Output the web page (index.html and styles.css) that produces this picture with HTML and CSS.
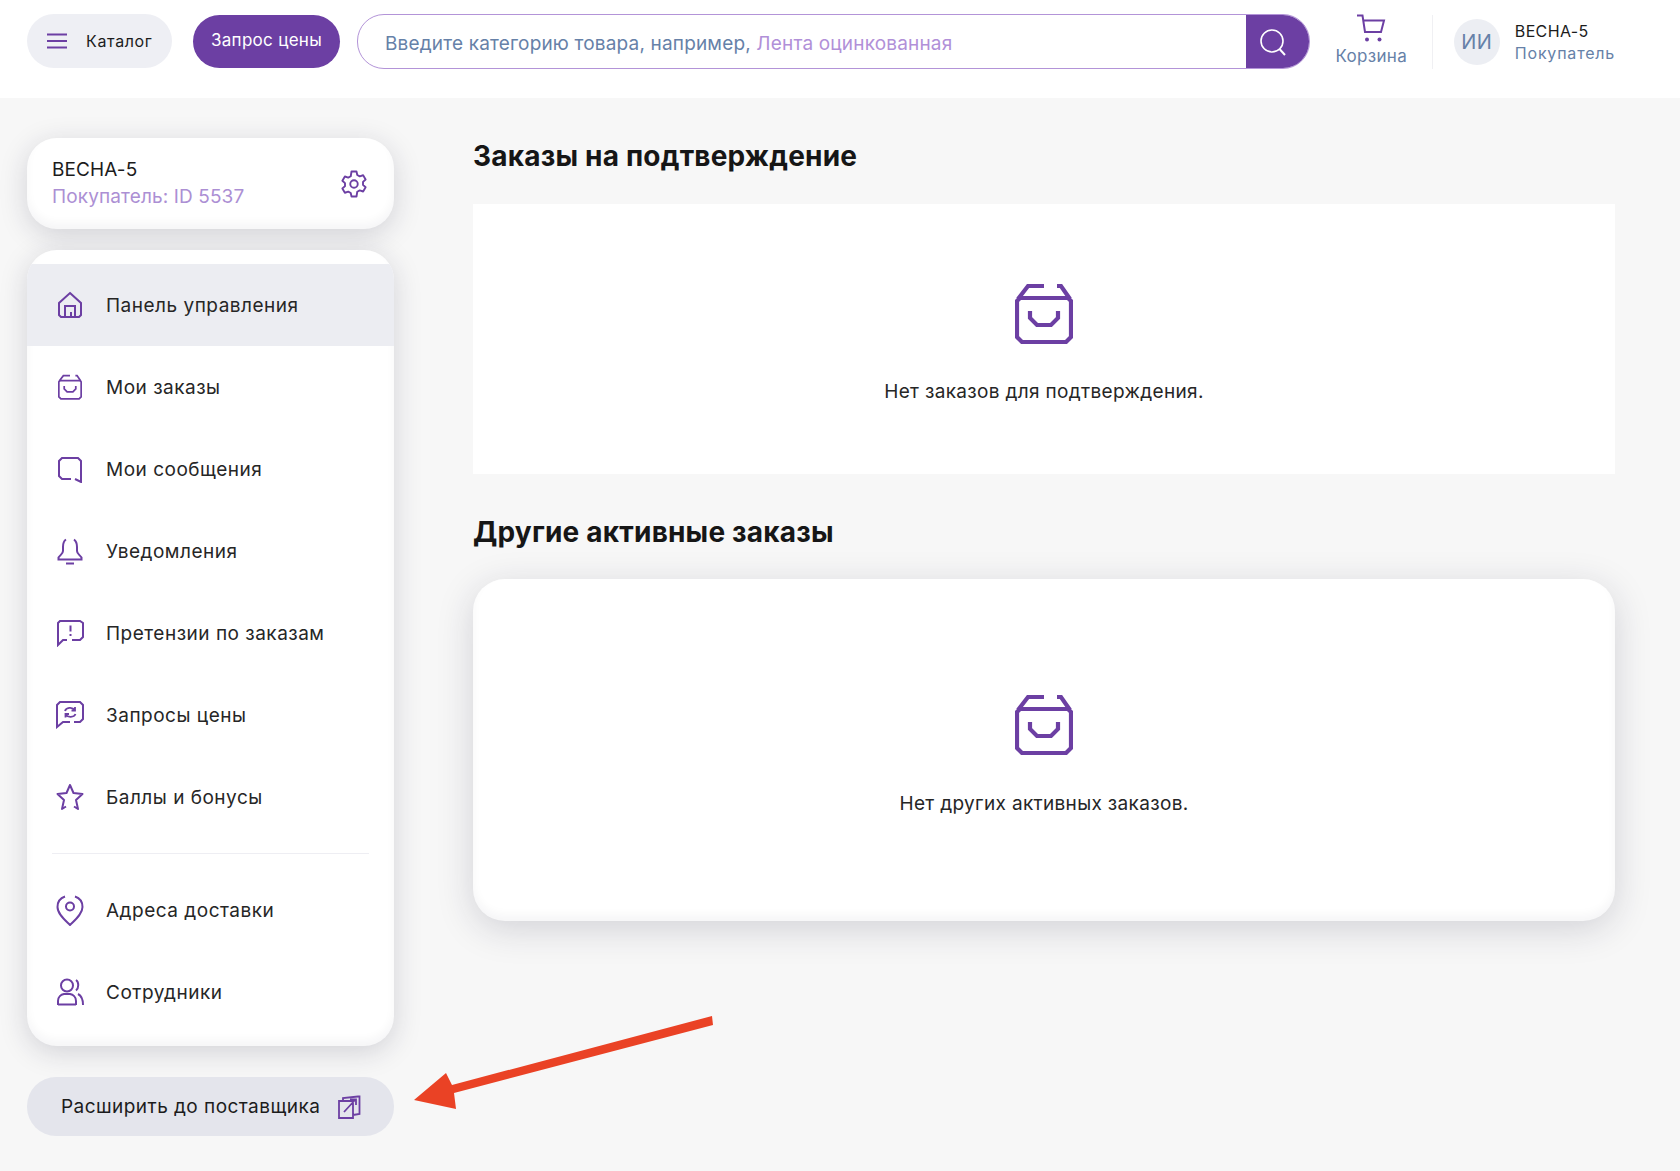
FILE: index.html
```html
<!DOCTYPE html>
<html lang="ru">
<head>
	<meta charset="UTF-8">
	<title>Панель управления</title>
	<link rel="stylesheet" href="styles.css">
</head>
<body>
	<svg class="sprite" width="0" height="0">
		<symbol id="i-box" viewBox="0 0 58 61">
			<path d="M29 3H13L3 16M42 3H46L55 16M5 15H53L56 18V54L51 59H7L2 54V18ZM15 28V35L22 42H36L43 35V28" fill="none" stroke="currentColor" stroke-width="4.2"/>
		</symbol>
	</svg>

	<header class="topbar">
		<a class="catalog-btn">
			<svg class="burger" width="22" height="16" viewBox="0 0 22 16"><path d="M1 1.5H21M1 8H21M1 14.5H21" stroke="currentColor" stroke-width="2"/></svg>
			<span>Каталог</span>
		</a>
		<a class="request-btn">Запрос цены</a>
		<div class="search">
			<div class="search-text">Введите категорию товара, например, <span>Лента оцинкованная</span></div>
			<div class="search-btn">
				<svg width="30" height="30" viewBox="0 0 30 30"><circle cx="14" cy="14" r="11" fill="none" stroke="#fff" stroke-width="1.6"/><path d="M21.5 22L27 28" stroke="#fff" stroke-width="2"/></svg>
			</div>
		</div>
		<div class="cart">
			<svg width="32" height="28" viewBox="0 0 32 28"><path d="M2 1.5H7.500L10 18H26L29 6.500H8.500" fill="none" stroke="currentColor" stroke-width="2"/><circle cx="12" cy="25.5" r="2" fill="currentColor"/><circle cx="24.5" cy="25.5" r="2" fill="currentColor"/></svg>
			<span>Корзина</span>
		</div>
		<div class="account">
			<div class="avatar">ИИ</div>
			<div class="account-text">
				<div class="account-name">ВЕСНА-5</div>
				<div class="account-role">Покупатель</div>
			</div>
		</div>
	</header>

	<div class="page">
		<aside class="sidebar">
			<div class="profile card">
				<div>
					<div class="profile-name">ВЕСНА-5</div>
					<div class="profile-id">Покупатель: ID 5537</div>
				</div>
				<svg class="gear" width="30" height="30" viewBox="0 0 24 24"><path d="M10 2h4l.6 2.8 2 1.1 2.700-.9 2 3.400-2.100 1.900v2.400l2.100 1.900-2 3.400-2.700-.9-2 1.100L14 22h-4l-.6-2.800-2-1.100-2.700.9-2-3.400 2.100-1.900v-2.400L2.700 9.400l2-3.400 2.700.9 2-1.100Z" fill="none" stroke="currentColor" stroke-width="1.5" stroke-linejoin="round"/><circle cx="12" cy="12" r="3" fill="none" stroke="currentColor" stroke-width="1.5"/></svg>
			</div>

			<nav class="menu card">
				<a class="menu-item active">
					<svg class="menu-icon" viewBox="0 0 28 28"><path d="M14 2L25 12V24L23 26H5L3 24V12ZM9 26V15H19V25M15 21V25" fill="none" stroke="currentColor" stroke-width="2"/></svg>
					Панель управления
				</a>
				<a class="menu-item">
					<svg class="menu-icon" viewBox="0 0 28 28"><use href="#i-box" x="2" y="1" width="24" height="26"/></svg>
					Мои заказы
				</a>
				<a class="menu-item">
					<svg class="menu-icon" viewBox="0 0 28 28"><path d="M15 24H6L3 21V6L6 3H22L25 6V27L19 24" fill="none" stroke="currentColor" stroke-width="2"/></svg>
					Мои сообщения
				</a>
				<a class="menu-item">
					<svg class="menu-icon" viewBox="0 0 28 28"><path d="M10 2.500C7.500 4 7 7 7 10V14C7 17 4 18 2.500 20.500V22.500H25.500V20.500C24 18 21 17 21 14V10C21 7 20 4 18 2.500M10 26.500H18" fill="none" stroke="currentColor" stroke-width="2"/></svg>
					Уведомления
				</a>
				<a class="menu-item">
					<svg class="menu-icon" viewBox="0 0 28 28"><path d="M11 21H7L2 26V4L4 2H24L27 4V18L24 21H16M14.500 6.500V12.500M14.500 15V17" fill="none" stroke="currentColor" stroke-width="2"/></svg>
					Претензии по заказам
				</a>
				<a class="menu-item">
					<svg class="menu-icon" viewBox="0 0 28 28"><path d="M14 21H7L1 26V4L4 1H24L27 4V18L24 21H18" fill="none" stroke="currentColor" stroke-width="2"/><path d="M9 10C10 6.500 16 5.500 19 9M19 6V9.500H15.500M19.500 13C18 16.500 12 17 9.500 13.500M9.500 16.500V13H13" fill="none" stroke="currentColor" stroke-width="1.800"/></svg>
					Запросы цены
				</a>
				<a class="menu-item">
					<svg class="menu-icon" viewBox="0 0 28 28"><path d="M18 23.500L22 26L20 17L26.500 11L17.500 10L14 2L10.500 10L1.500 11L8 17L6 26L10 23.500" fill="none" stroke="currentColor" stroke-width="2" stroke-linejoin="round"/></svg>
					Баллы и бонусы
				</a>
				<div class="menu-sep"></div>
				<a class="menu-item">
					<svg class="menu-icon tall" viewBox="0 0 28 32"><path d="M9 2.500C4.500 4 1.500 8 1.500 13C1.500 20 9 26 14 31C19 26 26.500 20 26.500 13C26.500 8 23.500 4 19 2.500" fill="none" stroke="currentColor" stroke-width="2"/><circle cx="14" cy="12.500" r="4" fill="none" stroke="currentColor" stroke-width="2"/></svg>
					Адреса доставки
				</a>
				<a class="menu-item">
					<svg class="menu-icon" viewBox="0 0 28 28"><circle cx="11" cy="7.500" r="6" fill="none" stroke="currentColor" stroke-width="2"/><path d="M20 2C23 4 23 10 20 12.500M2 27V23C2 19 5 16.500 8 16H14C17 16.500 20 19 20 23V27M2 26.500H20M22 16C25 17.500 27 20 27 27" fill="none" stroke="currentColor" stroke-width="2"/></svg>
					Сотрудники
				</a>
			</nav>

			<a class="upgrade-btn">
				<span>Расширить до поставщика</span>
				<svg width="24" height="24" viewBox="0 0 24 24"><path d="M2 6H16V23H2ZM6 6V3L21 1.500H22.500V19L16 20M7 17L18 5M13 4.500H19V10" fill="none" stroke="currentColor" stroke-width="1.800"/></svg>
			</a>
		</aside>

		<main class="content">
			<h2 class="section-title">Заказы на подтверждение</h2>
			<section class="panel panel-flat">
				<svg class="box-icon"><use href="#i-box"/></svg>
				<p>Нет заказов для подтверждения.</p>
			</section>

			<h2 class="section-title">Другие активные заказы</h2>
			<section class="panel panel-round">
				<svg class="box-icon"><use href="#i-box"/></svg>
				<p>Нет других активных заказов.</p>
			</section>
		</main>
	</div>

	<svg class="arrow" width="320" height="110" viewBox="0 0 320 110"><path d="M4 84L36 57L42 69L302 0L303 9L44 77L46 93Z" fill="#ea4225"/></svg>
</body>
</html>
```

FILE: styles.css
```css
body {
	margin: 0;
	background-color: #f7f7f7;
	color: #1c1c1c;
	font-family: Inter, "Noto Sans", sans-serif;
	min-height: 1171px;
	position: relative;
}

a {
	color: inherit;
	text-decoration: none;
}

.sprite {
	position: absolute;
}

/* top bar */
.topbar {
	height: 98px;
	box-sizing: border-box;
	background-color: #fff;
	display: flex;
	align-items: center;
	padding: 0 65px 15px 27px;
}

.catalog-btn {
	width: 145px;
	height: 54px;
	margin-top: -1px;
	box-sizing: border-box;
	padding-left: 20px;
	display: flex;
	align-items: center;
	gap: 18px;
	background-color: #eeeff4;
	border-radius: 27px;
	font-size: 16px;
	letter-spacing: 0.65px;
}

.burger {
	color: #6c3fa3;
	margin-left: -1px;
}

.request-btn {
	width: 147px;
	height: 53px;
	margin-left: 21px;
	display: flex;
	align-items: center;
	justify-content: center;
	padding-bottom: 3px;
	box-sizing: border-box;
	background-color: #6c3fa3;
	color: #fff;
	border-radius: 27px;
	font-size: 17px;
	letter-spacing: 0.3px;
}

.search {
	width: 953px;
	height: 55px;
	margin-left: 17px;
	box-sizing: border-box;
	display: flex;
	align-items: center;
	justify-content: space-between;
	border: 1.5px solid #b394d8;
	border-radius: 27px;
	overflow: hidden;
	background-color: #fff;
}

.search-text {
	padding-left: 27px;
	padding-top: 3px;
	font-size: 19px;
	letter-spacing: 0.17px;
	color: #6681a8;
}

.search-text span {
	color: #b190d8;
}

.search-btn {
	width: 64px;
	height: 55px;
	margin-right: -1px;
	padding-right: 9px;
	box-sizing: border-box;
	display: flex;
	align-items: center;
	justify-content: center;
	background-color: #6c3fa3;
}

.cart {
	width: 122px;
	display: flex;
	flex-direction: column;
	align-items: center;
	color: #6c3fa3;
	gap: 4px;
	margin-top: -4px;
}

.cart span {
	color: #6681a8;
	font-size: 17px;
	letter-spacing: 0.3px;
	padding-left: 1px;
}

.account {
	display: flex;
	align-items: center;
	gap: 15px;
	padding-left: 21px;
	height: 54px;
	border-left: 1px solid #f0f0f3;
}

.avatar {
	width: 46px;
	height: 46px;
	border-radius: 50%;
	background-color: #eceef3;
	color: #6681a8;
	display: flex;
	align-items: center;
	justify-content: center;
	font-size: 20px;
	letter-spacing: 0.5px;
}

.account-name {
	font-size: 16px;
	line-height: 22px;
	letter-spacing: 0.35px;
}

.account-role {
	font-size: 16px;
	line-height: 22px;
	letter-spacing: 0.8px;
	color: #6681a8;
}

/* page columns */
.page {
	display: grid;
	grid-template-columns: 367px 1142px;
	column-gap: 79px;
	padding: 40px 0 0 27px;
}

.card {
	background-color: #fff;
	border-radius: 30px;
	box-shadow: 0 6px 28px rgba(30, 30, 60, 0.17), inset 0 -6px 10px rgba(30, 30, 60, 0.04);
}

.sidebar {
	display: flex;
	flex-direction: column;
}

.profile {
	height: 91px;
	box-sizing: border-box;
	padding: 0 25px;
	display: flex;
	align-items: center;
	justify-content: space-between;
}

.profile-name {
	font-size: 19px;
	line-height: 26px;
	letter-spacing: 0.1px;
}

.profile-id {
	font-size: 19px;
	line-height: 27px;
	letter-spacing: 0.12px;
	color: #ac8fd4;
}

.gear {
	color: #6c3fa3;
}

.menu {
	margin-top: 21px;
	height: 796px;
	box-sizing: border-box;
	padding-top: 14px;
	overflow: hidden;
}

.menu-item {
	height: 82px;
	display: flex;
	align-items: center;
	gap: 22px;
	padding-left: 29px;
	font-size: 19px;
	letter-spacing: 0.5px;
	color: #262626;
}

.menu-item.active {
	background-color: #ecedf2;
}

.menu-icon {
	width: 28px;
	height: 28px;
	color: #6c3fa3;
	flex: none;
}

.menu-icon.tall {
	height: 32px;
}

.menu-sep {
	height: 1px;
	margin: 15px 25px 15px;
	background-color: #eeeef3;
}

.upgrade-btn {
	margin-top: 31px;
	height: 59px;
	box-sizing: border-box;
	padding: 0 33px 0 34px;
	display: flex;
	align-items: center;
	justify-content: space-between;
	background-color: #e4e5ec;
	border-radius: 29px;
	font-size: 19px;
	letter-spacing: 0.45px;
}

.upgrade-btn svg {
	color: #6c3fa3;
}

/* main */
.section-title {
	margin: 0;
	font-size: 28px;
	line-height: 36px;
	font-weight: 700;
	letter-spacing: 0.2px;
	color: #161616;
}

.panel {
	background-color: #fff;
	margin-top: 30px;
	display: flex;
	flex-direction: column;
	align-items: center;
}

.panel p {
	margin: 0;
	font-size: 19px;
	letter-spacing: 0.33px;
	color: #262626;
}

.box-icon {
	width: 58px;
	height: 61px;
	color: #6c3fa3;
	margin-bottom: 36px;
}

.panel-flat {
	height: 270px;
	padding-top: 79px;
	box-sizing: border-box;
	margin-bottom: 40px;
}

.panel-round {
	height: 342px;
	padding-top: 115px;
	box-sizing: border-box;
	border-radius: 32px;
	box-shadow: 0 8px 36px rgba(30, 30, 60, 0.17), inset 0 -6px 10px rgba(30, 30, 60, 0.04);
	margin-top: 29px;
}

.panel-round .box-icon {
	margin-bottom: 37px;
}

.arrow {
	position: absolute;
	left: 410px;
	top: 1016px;
}
```
